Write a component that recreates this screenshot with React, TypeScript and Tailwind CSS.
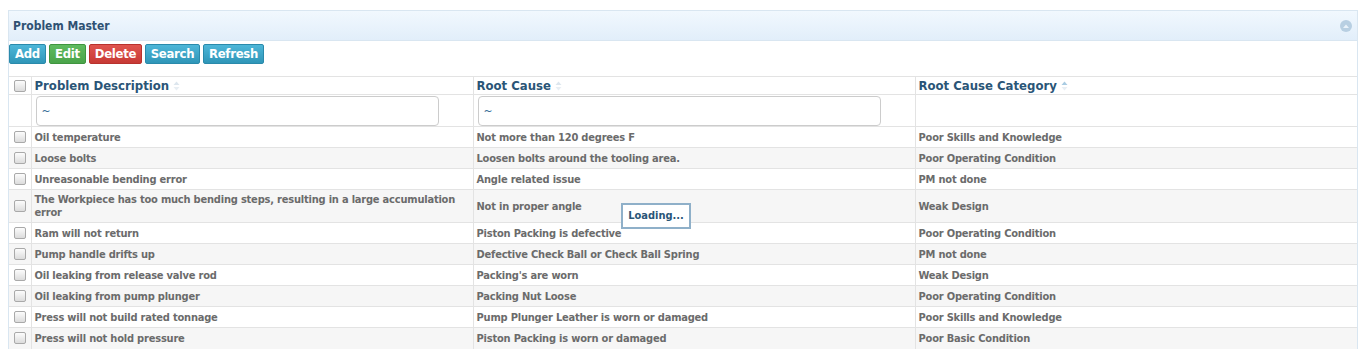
import React from 'react';

interface ProblemRow {
    description: string;
    rootCause: string;
    category: string;
}

const rows: ProblemRow[] = [
    { description: 'Oil temperature', rootCause: 'Not more than 120 degrees F', category: 'Poor Skills and Knowledge' },
    { description: 'Loose bolts', rootCause: 'Loosen bolts around the tooling area.', category: 'Poor Operating Condition' },
    { description: 'Unreasonable bending error', rootCause: 'Angle related issue', category: 'PM not done' },
    { description: 'The Workpiece has too much bending steps, resulting in a large accumulation error', rootCause: 'Not in proper angle', category: 'Weak Design' },
    { description: 'Ram will not return', rootCause: 'Piston Packing is defective', category: 'Poor Operating Condition' },
    { description: 'Pump handle drifts up', rootCause: 'Defective Check Ball or Check Ball Spring', category: 'PM not done' },
    { description: 'Oil leaking from release valve rod', rootCause: "Packing's are worn", category: 'Weak Design' },
    { description: 'Oil leaking from pump plunger', rootCause: 'Packing Nut Loose', category: 'Poor Operating Condition' },
    { description: 'Press will not build rated tonnage', rootCause: 'Pump Plunger Leather is worn or damaged', category: 'Poor Skills and Knowledge' },
    { description: 'Press will not hold pressure', rootCause: 'Piston Packing is worn or damaged', category: 'Poor Basic Condition' },
];

const font = { fontFamily: 'Tahoma, "DejaVu Sans Condensed", "DejaVu Sans", sans-serif' };

function Checkbox() {
    return (
        <span className="block w-[12px] h-[12px] mx-auto rounded-[2px] border border-[#a9a9a9] bg-gradient-to-b from-[#fcfcfc] to-[#dcdcdc]" />
    );
}

function SortIcon({ active = false }: { active?: boolean }) {
    return (
        <svg width="7" height="10" viewBox="0 0 7 10" className="inline-block ml-[4px] align-middle">
            <path d="M3.5 0.5 L6.5 4 L0.5 4 Z" fill={active ? '#a9cbe2' : '#dde6ee'} />
            <path d="M3.5 9.5 L6.5 6 L0.5 6 Z" fill="#e8eef3" />
        </svg>
    );
}

function ToolButton({ label, color, width }: { label: string; color: 'info' | 'success' | 'danger'; width: string }) {
    const colors = {
        info: 'bg-gradient-to-b from-[#4db6d8] to-[#2f96b8] border-[#2a8aab]',
        success: 'bg-gradient-to-b from-[#5fbb5f] to-[#4aa44a] border-[#3f953f]',
        danger: 'bg-gradient-to-b from-[#e0544e] to-[#c73a35] border-[#b8322d]',
    };
    return (
        <button className={`h-[20px] px-0 rounded-[2px] border text-white font-bold text-[13px] leading-[18px] tracking-[-0.3px] ${width} ${colors[color]}`}>
            {label}
        </button>
    );
}

export default function App() {
    return (
        <div className="bg-white w-[1361px] h-[355px] overflow-hidden pt-[10px] pl-[8px]" style={font}>
            <div className="w-[1350px] border-t border-l border-r border-[#d9e6f1]">
                {/* Header */}
                <div className="h-[30px] flex items-center justify-between pl-[4px] pr-[5px] bg-gradient-to-b from-[#f1f8fe] to-[#e2eefa] border-b border-[#d9e6f1]">
                    <span className="text-[12px] font-bold text-[#2f5173]">Problem Master</span>
                    <span className="w-[12px] h-[12px] rounded-full bg-[#b8cfe2] flex items-center justify-center">
                        <svg width="6" height="4" viewBox="0 0 6 4"><path d="M0 4 L3 0.5 L6 4 Z" fill="#e9f2fa" /></svg>
                    </span>
                </div>

                {/* Toolbar */}
                <div className="flex gap-[3px] pt-[3px] h-[35px]">
                    <ToolButton label="Add" color="info" width="w-[37px]" />
                    <ToolButton label="Edit" color="success" width="w-[37px]" />
                    <ToolButton label="Delete" color="danger" width="w-[53px]" />
                    <ToolButton label="Search" color="info" width="w-[55px]" />
                    <ToolButton label="Refresh" color="info" width="w-[61px]" />
                </div>

                {/* Grid */}
                <div className="relative">
                    <table className="w-full border-collapse table-fixed">
                        <colgroup>
                            <col className="w-[22px]" />
                            <col className="w-[442px]" />
                            <col className="w-[442px]" />
                            <col />
                        </colgroup>
                        <thead>
                            <tr className="h-[18px] border-t border-[#e3e3e3]">
                                <th className="border-r border-[#e3e3e3] p-0"><Checkbox /></th>
                                <th className="border-r border-[#e3e3e3] text-left px-[3px] py-0 text-[13px] font-bold text-[#2a5577] leading-[16px]">
                                    Problem Description<SortIcon />
                                </th>
                                <th className="border-r border-[#e3e3e3] text-left px-[3px] py-0 text-[13px] font-bold text-[#2a5577] leading-[16px]">
                                    Root Cause<SortIcon />
                                </th>
                                <th className="text-left px-[3px] py-0 text-[13px] font-bold text-[#2a5577] leading-[16px]">
                                    Root Cause Category<SortIcon active />
                                </th>
                            </tr>
                            <tr className="h-[32px] border-t border-[#e3e3e3]">
                                <th className="border-r border-[#e3e3e3]" />
                                <th className="border-r border-[#e3e3e3] p-0 pl-[4px] text-left">
                                    <div className="w-[403px] h-[30px] rounded-[4px] border border-[#cccccc] flex items-center pl-[5px] text-[12px] text-[#3a6f9a] font-normal">~</div>
                                </th>
                                <th className="border-r border-[#e3e3e3] p-0 pl-[4px] text-left">
                                    <div className="w-[403px] h-[30px] rounded-[4px] border border-[#cccccc] flex items-center pl-[5px] text-[12px] text-[#3a6f9a] font-normal">~</div>
                                </th>
                                <th />
                            </tr>
                        </thead>
                        <tbody>
                            {rows.map((row, i) => (
                                <tr
                                    key={i}
                                    className={`border-t border-[#e3e3e3] text-[11px] font-bold text-[#6b6b6b] leading-[13px] tracking-[-0.2px] ${i % 2 === 1 ? 'bg-[#f6f6f6]' : 'bg-white'} ${row.description.length > 70 ? 'h-[33px]' : 'h-[21px]'}`}
                                >
                                    <td className="border-r border-[#e3e3e3] p-0"><Checkbox /></td>
                                    <td className="border-r border-[#e3e3e3] px-[3px] py-0">{row.description}</td>
                                    <td className="border-r border-[#e3e3e3] px-[3px] py-0">{row.rootCause}</td>
                                    <td className="px-[3px] py-0">{row.category}</td>
                                </tr>
                            ))}
                        </tbody>
                    </table>

                    {/* Loading indicator */}
                    <div className="absolute left-[612px] top-[127px] w-[70px] h-[26px] bg-white border-2 border-[#8fb0c9] flex items-center justify-center text-[11px] font-bold text-[#2a5577]">
                        Loading...
                    </div>
                </div>
            </div>
        </div>
    );
}
